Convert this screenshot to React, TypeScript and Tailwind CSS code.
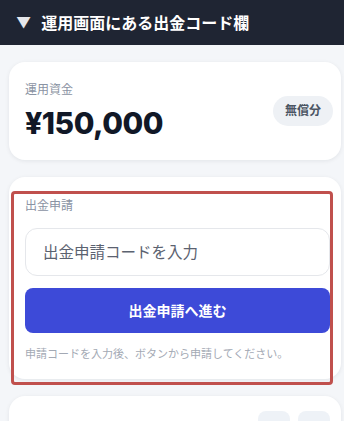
const font = { fontFamily: '"Inter", "Noto Sans CJK JP", sans-serif' };

function Header() {
  return (
    <div className="flex h-[45px] items-center gap-[10px] bg-[#1f2533] pl-[16px] text-white">
      <span className="text-[15px] leading-none text-[#e5e7eb]">▼</span>
      <h1 className="text-[16px] font-bold">運用画面にある出金コード欄</h1>
    </div>
  );
}

function FundCard() {
  return (
    <section className="flex h-[98px] w-[332px] items-center justify-between rounded-[16px] bg-white pl-[16px] pr-[8px] shadow-[0_1px_4px_rgba(15,23,42,0.08)]">
      <div className="flex flex-col">
        <p className="text-[12px] leading-[18px] text-[#8a93a3]">運用資金</p>
        <p className="mt-[6px] text-[30px] font-extrabold leading-[36px] tracking-[-0.5px] text-[#111827]">¥150,000</p>
      </div>
      <span className="rounded-full bg-[#eef1f5] px-[12px] py-[6px] text-[12px] font-semibold text-[#4b5563]">無償分</span>
    </section>
  );
}

function WithdrawCard() {
  return (
    <section className="relative w-[332px] rounded-[16px] bg-white pb-[17px] pl-[16px] pr-[11px] pt-[20px] shadow-[0_1px_4px_rgba(15,23,42,0.08)]">
      <p className="text-[12px] leading-[18px] text-[#8a93a3]">出金申請</p>
      <input
        className="mt-[13px] h-[48px] w-full rounded-[12px] border border-[#e5e7eb] bg-white px-[17px] text-[15.5px] text-[#374151] outline-none placeholder:text-[#5b6270]"
        placeholder="出金申請コードを入力"
      />
      <button className="mt-[12px] flex h-[45px] w-full items-center justify-center rounded-[8px] bg-[#3d4ad8] text-[14px] font-bold text-white">
        出金申請へ進む
      </button>
      <p className="mt-[13px] text-[11px] leading-[16px] text-[#a3a9b4]">申請コードを入力後、ボタンから申請してください。</p>
      <div className="pointer-events-none absolute left-[2px] top-[14px] h-[194px] w-[322px] rounded-[4px] border-[3px] border-[#c0504d]" />
    </section>
  );
}

function NextCard() {
  return (
    <section className="flex h-[60px] w-[332px] justify-end gap-[8px] rounded-[16px] bg-white pr-[11px] pt-[15px] shadow-[0_1px_4px_rgba(15,23,42,0.08)]">
      <div className="h-[32px] w-[32px] rounded-[8px] bg-[#eef2f7]" />
      <div className="h-[32px] w-[32px] rounded-[8px] bg-[#eef2f7]" />
    </section>
  );
}

export default function App() {
  return (
    <div className="h-[421px] w-[344px] overflow-hidden bg-[#f4f6f9]" style={font}>
      <Header />
      <main className="flex flex-col gap-[17px] pl-[9px] pt-[17px]">
        <FundCard />
        <WithdrawCard />
        <NextCard />
      </main>
    </div>
  );
}
